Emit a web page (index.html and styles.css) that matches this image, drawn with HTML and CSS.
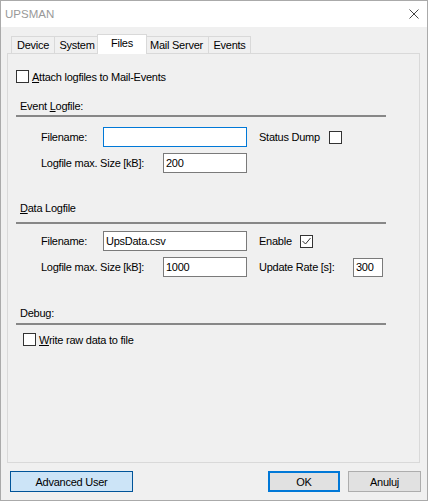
FILE: index.html
```html
<!DOCTYPE html>
<html lang="pl">
<head>
<meta charset="UTF-8">
<meta name="viewport" content="width=device-width, initial-scale=1.0">
<title>UPSMAN</title>
<link rel="stylesheet" href="styles.css">
</head>
<body>

<div class="window">
    <div class="titlebar">
        <span class="title">UPSMAN</span>
        <svg class="close" width="10" height="10" viewBox="0 0 10 10">
            <path d="M0.5 0.5 L9.5 9.5 M9.5 0.5 L0.5 9.5" stroke="#444" stroke-width="1" fill="none"/>
        </svg>
    </div>

    <div class="body">
        <div class="tabs">
            <div class="tab tab-device">Device</div>
            <div class="tab tab-system">System</div>
            <div class="tab tab-files active">Files</div>
            <div class="tab tab-mail">Mail Server</div>
            <div class="tab tab-events">Events</div>
        </div>

        <div class="panel">
            <div class="check-row attach">
                <span class="box"></span>
                <span><u>A</u>ttach logfiles to Mail-Events</span>
            </div>

            <div class="group-head head-event">Event <u>L</u>ogfile:</div>
            <div class="rows">
                <div class="row">
                    <span class="lbl lbl-name">Filename:</span>
                    <input class="field field-wide focused" type="text" value="">
                    <span class="side side-dump">Status Dump</span>
                    <span class="box"></span>
                </div>
                <div class="row">
                    <span class="lbl lbl-size">Logfile max. Size [kB]:</span>
                    <input class="field field-narrow" type="text" value="200">
                </div>
            </div>

            <div class="group-head head-data"><u>D</u>ata Logfile</div>
            <div class="rows">
                <div class="row">
                    <span class="lbl lbl-name">Filename:</span>
                    <input class="field field-wide" type="text" value="UpsData.csv">
                    <span class="side side-enable">Enable</span>
                    <span class="box">
                        <svg width="11" height="11" viewBox="0 0 11 11">
                            <path d="M1.5 5 L4.5 8 L9.5 2" stroke="#333" stroke-width="1" fill="none"/>
                        </svg>
                    </span>
                </div>
                <div class="row">
                    <span class="lbl lbl-size">Logfile max. Size [kB]:</span>
                    <input class="field field-narrow" type="text" value="1000">
                    <span class="side side-rate">Update Rate [s]:</span>
                    <input class="field field-rate" type="text" value="300">
                </div>
            </div>

            <div class="group-head head-debug">Debug:</div>
            <div class="check-row debug-check">
                <span class="box"></span>
                <span><u>W</u>rite raw data to file</span>
            </div>
        </div>
    </div>

    <div class="footer">
        <button class="btn btn-adv">Advanced User</button>
        <button class="btn btn-ok">OK</button>
        <button class="btn btn-cancel">Anuluj</button>
    </div>
</div>

</body>
</html>
```

FILE: styles.css
```css
* {
    box-sizing: border-box;
}

body {
    margin: 0;
    background-color: #fff;
    font-family: "Liberation Sans", Arial, sans-serif;
    font-size: 11px;
    letter-spacing: -0.25px;
    color: #000;
}

.window {
    width: 428px;
    height: 501px;
    border: 1px solid #aaa;
    background-color: #f0f0f0;
    display: flex;
    flex-direction: column;
}

.titlebar {
    height: 26px;
    flex: none;
    background-color: #fff;
    display: flex;
    align-items: center;
    justify-content: space-between;
    padding: 0 8px 0 4px;
}

.title {
    font-size: 11.5px;
    letter-spacing: 0;
    color: #999;
}

.close {
    display: block;
}

.body {
    padding: 7px 7px 0 6px;
}

/* tab strip */
.tabs {
    display: flex;
    align-items: flex-start;
    height: 20px;
    margin-bottom: -1px;
    padding-left: 4px;
    position: relative;
    z-index: 1;
}

.tab {
    height: 17px;
    margin-top: 2px;
    margin-left: -1px;
    border: 1px solid #d9d9d9;
    border-bottom: none;
    background-color: #f0f0f0;
    line-height: 16px;
    text-align: center;
}

.tab-device { width: 44px; margin-left: 0; }
.tab-system { width: 46px; }
.tab-mail   { width: 65px; }
.tab-events { width: 43px; }

.tab.active {
    width: 50px;
    height: 20px;
    margin-top: 0;
    margin-left: -3px;
    margin-right: -2px;
    background-color: #fff;
    position: relative;
    z-index: 1;
}

.panel {
    height: 410px;
    border: 1px solid #d9d9d9;
    background-color: #f0f0f0;
    padding: 0 33px 0 8px;
}

.check-row {
    display: flex;
    align-items: center;
    gap: 3px;
    height: 13px;
}

.attach {
    margin-top: 16px;
}

.debug-check {
    margin-top: 8px;
    margin-left: 7px;
}

.box {
    width: 13px;
    height: 13px;
    flex: none;
    border: 1px solid #333;
    background-color: #fff;
}

.box svg {
    display: block;
}

/* group headers with rule */
.group-head {
    padding: 0 0 2px 4px;
    line-height: 14px;
    border-bottom: 2px solid #878787;
}

.head-event { margin-top: 16px; }
.head-data  { margin-top: 28px; padding-bottom: 7px; }
.head-debug { margin-top: 29px; padding-bottom: 3px; }

.rows {
    display: flex;
    flex-direction: column;
    gap: 6px;
    margin-top: 10px;
    padding-left: 25px;
}

.head-data + .rows {
    margin-top: 7px;
}

.row {
    display: flex;
    align-items: center;
    height: 20px;
}

.lbl-name { width: 62px; }
.lbl-size { width: 122px; }

.field {
    height: 20px;
    margin: 0;
    padding: 0 2px;
    border: 1px solid #7a7a7a;
    border-radius: 0;
    background-color: #fff;
    font: inherit;
    letter-spacing: -0.25px;
    color: #000;
    outline: none;
}

.field-wide   { width: 144px; }
.field-narrow { width: 84px; }
.field-rate   { width: 30px; height: 19px; }

.focused {
    border-color: #0078d7;
}

.side {
    margin-left: 12px;
    flex: none;
}

.side-dump   { width: 70px; }
.side-enable { width: 41px; }
.side-rate   { width: 94px; }

/* bottom buttons */
.footer {
    display: flex;
    margin-top: 8px;
    padding: 0 6px 0 9px;
}

.btn {
    height: 21px;
    padding: 0;
    border: 1px solid #adadad;
    border-radius: 0;
    background-color: #e1e1e1;
    font: inherit;
    letter-spacing: -0.25px;
    color: #000;
}

.btn-adv {
    width: 123px;
    background-color: #cce4f7;
    border-color: #005499;
}

.btn-ok {
    width: 72px;
    margin-left: auto;
    border: 2px solid #0078d7;
}

.btn-cancel {
    width: 73px;
    margin-left: 8px;
}
```
